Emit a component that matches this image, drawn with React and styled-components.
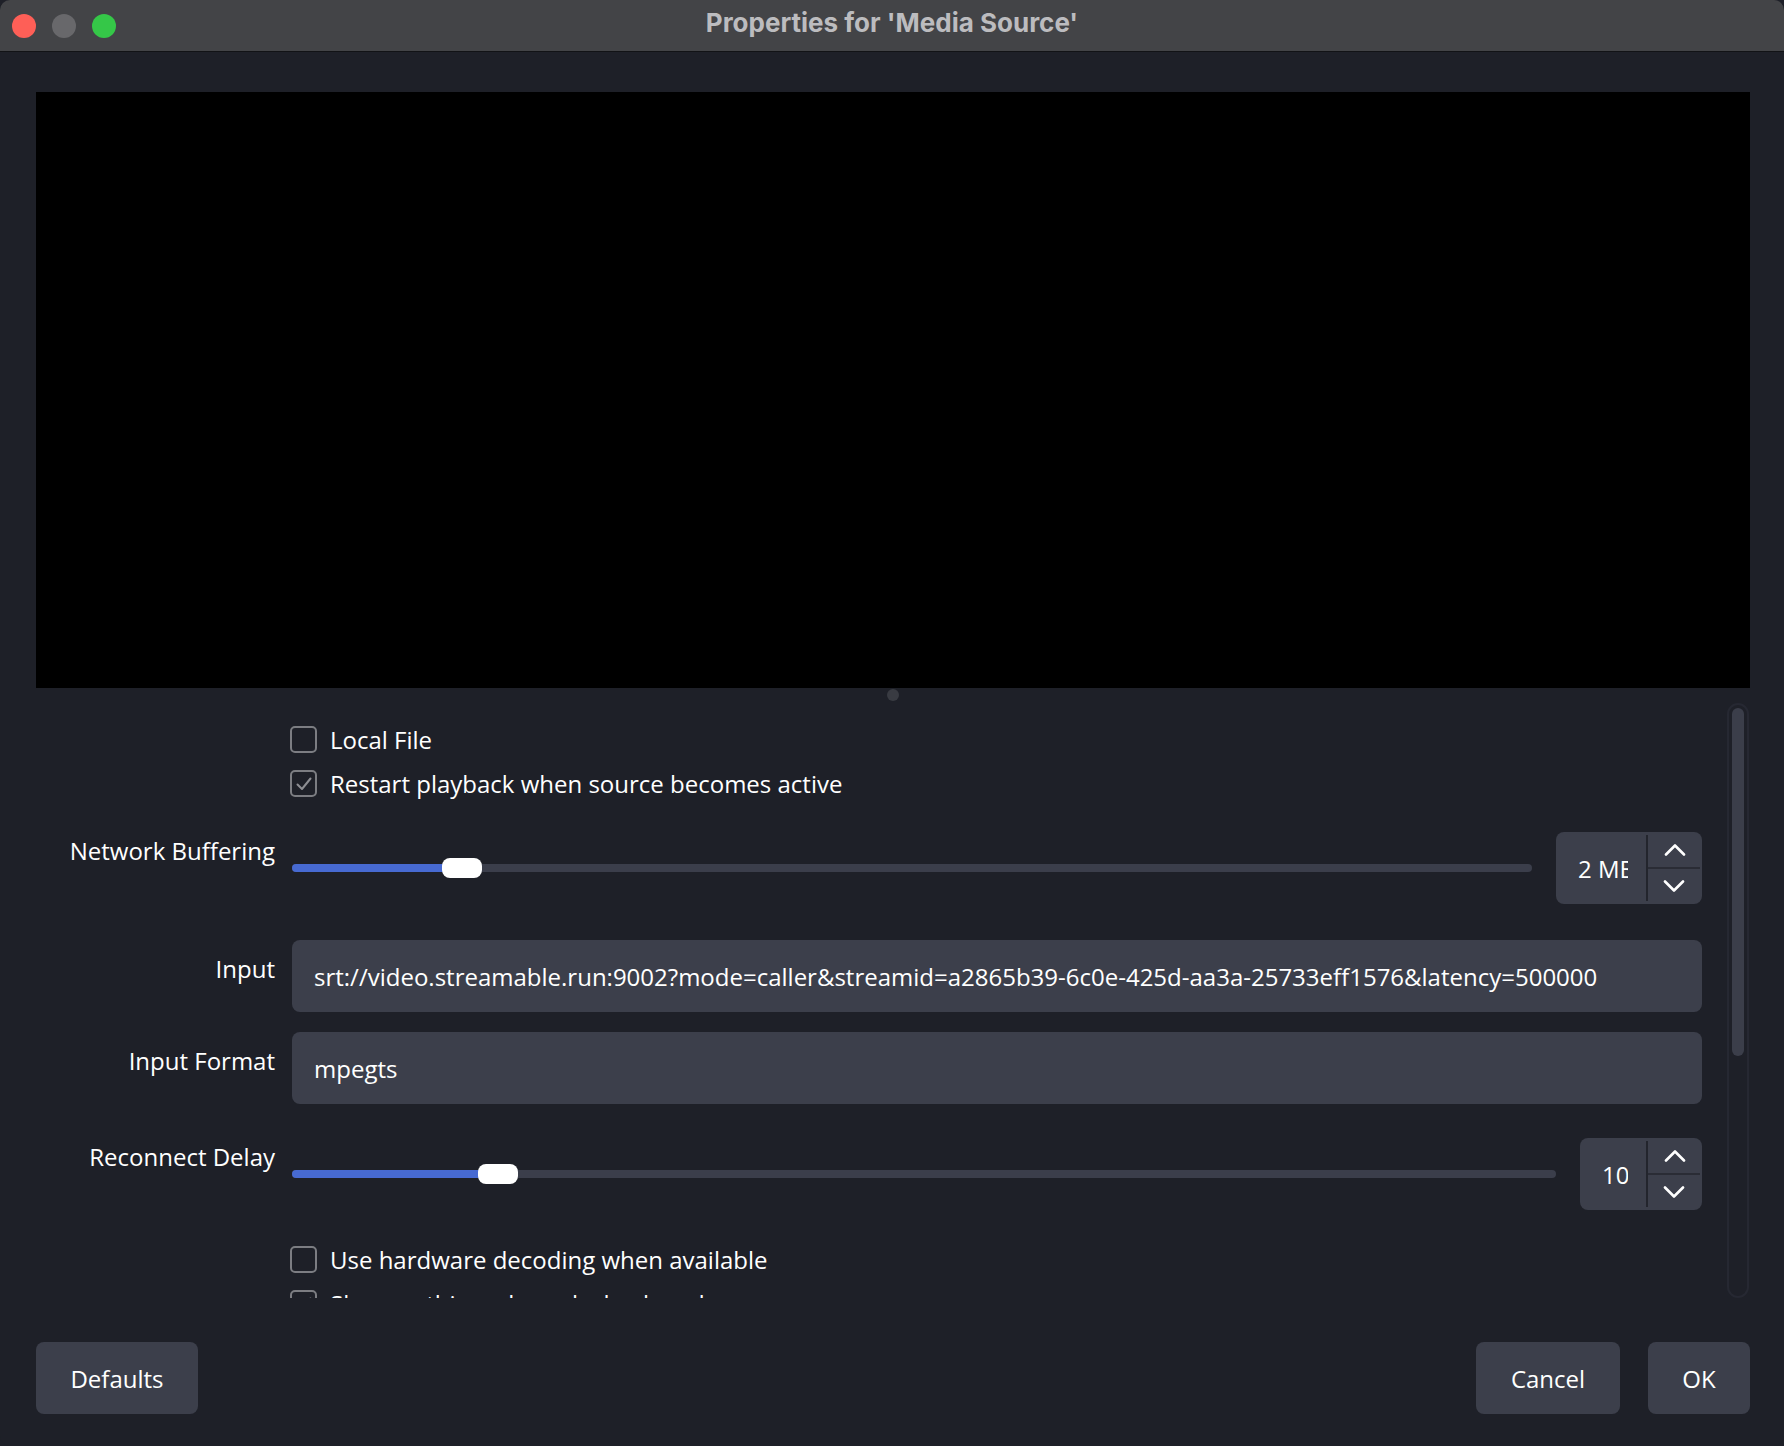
import React from 'react';
import styled, { createGlobalStyle } from 'styled-components';

const Global = createGlobalStyle`
  html, body { margin: 0; padding: 0; background: #1e2028; }
  body { font-family: "Open Sans", "Noto Sans", sans-serif; -webkit-font-smoothing: antialiased; }
  * { box-sizing: border-box; }
`;

const Window = styled.div`
  width: 1784px;
  height: 1446px;
  display: flex;
  flex-direction: column;
  background: #1e2028;
  border-radius: 10px;
  overflow: hidden;
`;

const TitleBar = styled.div`
  flex: none;
  height: 52px;
  background: #434447;
  border-bottom: 1px solid #121316;
  display: grid;
  grid-template-columns: 1fr auto 1fr;
  align-items: center;
`;

const Lights = styled.div`
  display: flex;
  gap: 16px;
  padding-left: 12px;
`;

const Light = styled.span`
  width: 24px;
  height: 24px;
  border-radius: 50%;
  background: ${p => p.$color};
`;

const Title = styled.div`
  font-family: Inter, "Liberation Sans", sans-serif;
  font-weight: 700;
  font-size: 26px;
  color: #bcbcbf;
  padding-bottom: 6px;
`;

const Body = styled.div`
  flex: 1;
  display: flex;
  flex-direction: column;
  padding: 40px 34px 32px 36px;
`;

const Preview = styled.div`
  height: 596px;
  background: #000;
`;

const Splitter = styled.div`
  height: 15px;
  display: flex;
  justify-content: center;
  padding-top: 1px;
`;

const SplitDot = styled.span`
  width: 12px;
  height: 12px;
  border-radius: 50%;
  background: #393b42;
`;

const Properties = styled.div`
  height: 595px;
  display: flex;
  gap: 25px;
  padding-right: 1px;
`;

const Form = styled.div`
  flex: 1;
  overflow: hidden;
  padding-top: 23px;
  display: flex;
  flex-direction: column;
`;

const Row = styled.div`
  display: grid;
  grid-template-columns: 239px 1fr;
  column-gap: 17px;
  margin-top: ${p => p.$mt || 0}px;
  flex: none;
`;

const Label = styled.div`
  text-align: right;
  color: #fff;
  font-size: 24px;
  line-height: 33px;
  padding-top: ${p => p.$pt || 0}px;
  white-space: nowrap;
`;

const CheckLine = styled.label`
  display: flex;
  align-items: center;
  gap: 13px;
  height: 27px;
  margin-left: -2px;
  color: #fff;
  font-size: 24px;
  line-height: 27px;
  white-space: nowrap;
`;

const Box = styled.span`
  width: 27px;
  height: 27px;
  flex: none;
  border: 2px solid #7c7d82;
  border-radius: 5px;
  display: flex;
  align-items: center;
  justify-content: center;
`;

const SliderLine = styled.div`
  display: flex;
  align-items: center;
  gap: 24px;
  height: 72px;
`;

const Track = styled.div`
  flex: 1;
  height: 8px;
  border-radius: 4px;
  background: #3b3e4b;
  position: relative;
`;

const Fill = styled.div`
  height: 100%;
  border-radius: 4px;
  background: #476ad2;
`;

const Handle = styled.div`
  position: absolute;
  top: -6px;
  width: 40px;
  height: 20px;
  border-radius: 8px;
  background: #fff;
`;

const Spin = styled.div`
  width: ${p => p.$w}px;
  height: 72px;
  flex: none;
  display: flex;
  background: #3c3f4b;
  border-radius: 8px;
  overflow: hidden;
`;

const SpinValue = styled.div`
  flex: 1;
  min-width: 0;
  display: flex;
  align-items: center;
  padding: 0 18px 0 22px;
  color: #fff;
  font-size: 24px;
  line-height: 33px;
`;

const Clip = styled.span`
  overflow: hidden;
  white-space: nowrap;
  display: block;
`;

const SpinDivider = styled.span`
  width: 2px;
  margin: 3px 0;
  background: #23252d;
`;

const SpinButtons = styled.div`
  width: 54px;
  display: flex;
  flex-direction: column;
`;

const SpinButton = styled.div`
  flex: 1;
  display: flex;
  align-items: center;
  justify-content: center;
  border-top: ${p => (p.$sep ? '2px solid #2a2c35' : 'none')};
  margin-right: ${p => (p.$sep ? '2px' : '0')};
`;

const Field = styled.div`
  height: 72px;
  background: #3c3f4b;
  border-radius: 8px;
  display: flex;
  align-items: center;
  padding-left: 22px;
  color: #fff;
  font-size: 24px;
  line-height: 33px;
  white-space: nowrap;
  overflow: hidden;
`;

const ScrollTrack = styled.div`
  width: 22px;
  flex: none;
  border: 2px solid #262832;
  border-radius: 11px;
  padding: 3px;
`;

const ScrollThumb = styled.div`
  height: 348px;
  border-radius: 6px;
  background: #3b3e4a;
`;

const Footer = styled.div`
  margin-top: 44px;
  display: flex;
  align-items: center;
  gap: 28px;
`;

const Spacer = styled.div`
  flex: 1;
`;

const Button = styled.button`
  width: ${p => p.$w}px;
  height: 72px;
  border: none;
  border-radius: 8px;
  background: #3c3f4b;
  color: #fff;
  font-family: "Open Sans", "Noto Sans", sans-serif;
  font-size: 24px;
  padding: 0;
`;

const Chevron = ({ up }) => (
  <svg width="22" height="13" viewBox="0 0 22 13">
    <path
      d={up ? 'M2 11.5 L11 2.5 L20 11.5' : 'M2 1.5 L11 10.5 L20 1.5'}
      fill="none"
      stroke="#fff"
      strokeWidth="2.6"
      strokeLinecap="round"
      strokeLinejoin="round"
    />
  </svg>
);

const Check = ({ checked, children }) => (
  <CheckLine>
    <Box>
      {checked && (
        <svg width="20" height="20" viewBox="0 0 20 20">
          <path d="M3.5 10.5 L8 15 L16.5 4.5" fill="none" stroke="#8d8e93" strokeWidth="2" strokeLinecap="round" strokeLinejoin="round" />
        </svg>
      )}
    </Box>
    {children}
  </CheckLine>
);

const SpinBox = ({ w, value }) => (
  <Spin $w={w}>
    <SpinValue>
      <Clip>{value}</Clip>
    </SpinValue>
    <SpinDivider />
    <SpinButtons>
      <SpinButton><Chevron up /></SpinButton>
      <SpinButton $sep><Chevron /></SpinButton>
    </SpinButtons>
  </Spin>
);

const Slider = ({ pos, spinW, value }) => (
  <SliderLine>
    <Track>
      <Fill style={{ width: pos + 20 }} />
      <Handle style={{ left: pos }} />
    </Track>
    <SpinBox w={spinW} value={value} />
  </SliderLine>
);

export default function App() {
  return (
    <>
      <Global />
      <Window>
        <TitleBar>
          <Lights>
            <Light $color="#fe5f57" />
            <Light $color="#68686b" />
            <Light $color="#35c748" />
          </Lights>
          <Title>Properties for 'Media Source'</Title>
          <div />
        </TitleBar>
        <Body>
          <Preview />
          <Splitter>
            <SplitDot />
          </Splitter>
          <Properties>
            <Form>
              <Row>
                <div />
                <Check>Local File</Check>
              </Row>
              <Row $mt={17}>
                <div />
                <Check checked>Restart playback when source becomes active</Check>
              </Row>
              <Row $mt={35}>
                <Label $pt={2}>Network Buffering</Label>
                <Slider pos={150} spinW={146} value="2 MB" />
              </Row>
              <Row $mt={36}>
                <Label $pt={12}>Input</Label>
                <Field>srt://video.streamable.run:9002?mode=caller&amp;streamid=a2865b39-6c0e-425d-aa3a-25733eff1576&amp;latency=500000</Field>
              </Row>
              <Row $mt={20}>
                <Label $pt={12}>Input Format</Label>
                <Field>mpegts</Field>
              </Row>
              <Row $mt={34}>
                <Label $pt={2}>Reconnect Delay</Label>
                <Slider pos={186} spinW={122} value="10" />
              </Row>
              <Row $mt={36}>
                <div />
                <Check>Use hardware decoding when available</Check>
              </Row>
              <Row $mt={17}>
                <div />
                <Check checked>Show nothing when playback ends</Check>
              </Row>
            </Form>
            <ScrollTrack>
              <ScrollThumb />
            </ScrollTrack>
          </Properties>
          <Footer>
            <Button $w={162}>Defaults</Button>
            <Spacer />
            <Button $w={144}>Cancel</Button>
            <Button $w={102}>OK</Button>
          </Footer>
        </Body>
      </Window>
    </>
  );
}
